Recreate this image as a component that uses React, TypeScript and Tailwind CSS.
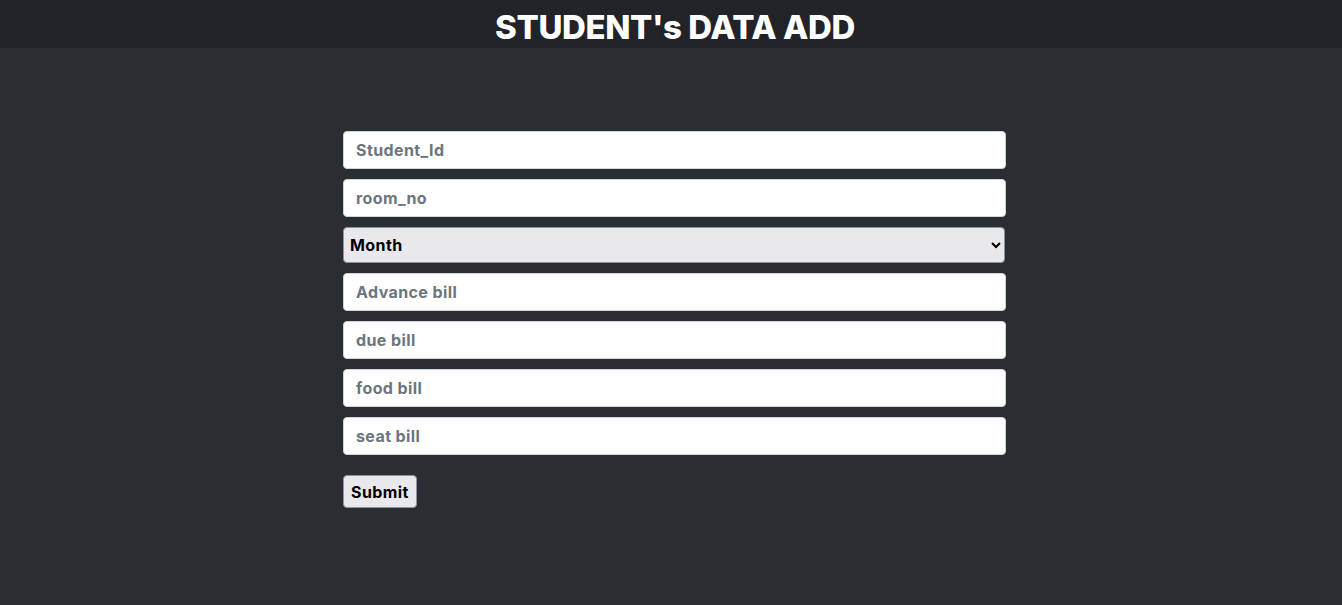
import { useState } from 'react';

const fields = ['Student_Id', 'room_no'];
const bills = ['Advance bill', 'due bill', 'food bill', 'seat bill'];
const months = [
  'January', 'February', 'March', 'April', 'May', 'June',
  'July', 'August', 'September', 'October', 'November', 'December',
];

const inputCls =
  'h-[38px] w-full rounded-[4px] border border-[#ced4da] bg-white px-[12px] text-[16px] font-bold tracking-[0.4px] text-[#212529] placeholder:text-[#6c757d] focus:outline-none';

export default function App() {
  const [month, setMonth] = useState('');

  return (
    <div className="min-h-[605px] bg-[#2a2d32] font-['Inter','Liberation_Sans',sans-serif]">
      <header className="flex h-[48px] items-center justify-center bg-[#212328] pl-[8px]">
        <h1 className="pt-[8px] text-[33px] font-extrabold tracking-[-0.4px] text-white">
          STUDENT's DATA ADD
        </h1>
      </header>
      <form
        className="mx-auto flex w-[670px] flex-col gap-[10px] pl-[7px] pt-[83px]"
        onSubmit={(e) => e.preventDefault()}
      >
        {fields.map((f) => (
          <input key={f} placeholder={f} className={inputCls} />
        ))}
        <select
          value={month}
          onChange={(e) => setMonth(e.target.value)}
          className="h-[36px] w-[662px] rounded-[4px] border border-[#8f8f9d] bg-[#e9e8ed] px-[2px] text-[16px] font-bold tracking-[0.4px] text-black"
        >
          <option value="">Month</option>
          {months.map((m) => (
            <option key={m}>{m}</option>
          ))}
        </select>
        {bills.map((f) => (
          <input key={f} placeholder={f} className={inputCls} />
        ))}
        <div className="pt-[10px]">
          <button
            type="submit"
            className="h-[33px] rounded-[4px] border border-[#8f8f9d] bg-[#e9e9ed] px-[7px] text-[16px] font-bold tracking-[0.4px] text-black"
          >
            Submit
          </button>
        </div>
      </form>
    </div>
  );
}
